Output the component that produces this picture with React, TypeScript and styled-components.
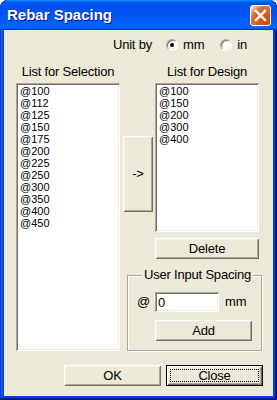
import styled, { createGlobalStyle } from "styled-components";

const UI_FONT = `"Liberation Sans", Arial, sans-serif`;

const GlobalStyle = createGlobalStyle`
  html, body {
    margin: 0;
    padding: 0;
    background: #ffffff;
  }
  body {
    width: 277px;
    height: 400px;
    overflow: hidden;
  }
`;

const selectionItems = [
  "@100", "@112", "@125", "@150", "@175", "@200",
  "@225", "@250", "@300", "@350", "@400", "@450",
];
const designItems = ["@100", "@150", "@200", "@300", "@400"];

export default function App() {
  return (
    <>
      <GlobalStyle />
      <Window>
        <TitleBar>
          <Title>Rebar Spacing</Title>
          <CloseBox>
            <svg width="19" height="19" viewBox="0 0 19 19">
              <path d="M5 5 L14 14 M14 5 L5 14" stroke="#fff" strokeWidth="2.4" strokeLinecap="square" />
            </svg>
          </CloseBox>
        </TitleBar>
        <Client>
          <UnitRow>
            <UnitLabel>Unit by</UnitLabel>
            <RadioOption>
              <Radio $checked />
              mm
            </RadioOption>
            <RadioOption $gap={5}>
              <Radio />
              in
            </RadioOption>
          </UnitRow>

          <Grid>
            <ColLabel $col={1}>List for Selection</ColLabel>
            <ColLabel $col={3}>List for Design</ColLabel>

            <SelectionList>
              {selectionItems.map((s) => (
                <Item key={s}>{s}</Item>
              ))}
            </SelectionList>

            <ArrowButton>-&gt;</ArrowButton>

            <DesignList>
              {designItems.map((s) => (
                <Item key={s}>{s}</Item>
              ))}
            </DesignList>

            <DeleteButton>Delete</DeleteButton>

            <GroupBox>
              <Legend>User Input Spacing</Legend>
              <InputRow>
                <At>@</At>
                <TextInput value="0" readOnly />
                <Unit>mm</Unit>
              </InputRow>
              <AddButton>Add</AddButton>
            </GroupBox>
          </Grid>

          <Footer>
            <Button $w={97}>OK</Button>
            <Button $w={97} $isDefault>
              <FocusRing>Close</FocusRing>
            </Button>
          </Footer>
        </Client>
      </Window>
    </>
  );
}

const Window = styled.div`
  box-sizing: border-box;
  width: 277px;
  height: 400px;
  display: flex;
  flex-direction: column;
  background: #0841dc;
  border-radius: 8px 8px 0 0;
  box-shadow: inset -1px -1px #00138c, inset 1px 1px #0831d9,
    inset -2px -2px #001ea0, inset 2px 2px #166aee, inset -3px -3px #003bda,
    inset 3px 3px #0855dd;
  overflow: hidden;
`;

const TitleBar = styled.div`
  height: 30px;
  flex: none;
  display: flex;
  align-items: center;
  justify-content: space-between;
  padding: 0 6px 0 6px;
  border-radius: 8px 8px 0 0;
  background: linear-gradient(
    180deg,
    #0997ff,
    #0053ee 8%,
    #0050ee 40%,
    #0066ff 88%,
    #0066ff 93%,
    #005bff 95%,
    #003dd7 96%,
    #003dd7
  );
`;

const Title = styled.div`
  font: bold 15px/16px "Liberation Sans", Arial, sans-serif;
  color: #ffffff;
  text-shadow: 1px 1px #0f1089;
  padding-left: 1px;
`;

const CloseBox = styled.div`
  box-sizing: border-box;
  width: 21px;
  height: 21px;
  border: 1px solid #ffffff;
  border-radius: 3px;
  display: flex;
  align-items: center;
  justify-content: center;
  background: radial-gradient(
    circle at 90% 90%,
    #cc4600 0%,
    #dc6527 55%,
    #cd7546 70%,
    #ffccb2 90%,
    #ffffff 100%
  );
  margin-top: 1px;
`;

const Client = styled.div`
  flex: 1;
  min-height: 0;
  margin: 0 4px 4px;
  background: #ece9d8;
  padding: 7px 10px 10px 12px;
  display: flex;
  flex-direction: column;
  font: 13px/16px ${UI_FONT};
  letter-spacing: -0.2px;
  color: #000;
`;

const UnitRow = styled.div`
  height: 16px;
  display: flex;
  align-items: center;
  justify-content: flex-end;
  padding-right: 16px;
`;

const UnitLabel = styled.span`
  margin-right: 14px;
`;

const RadioOption = styled.label<{ $gap?: number }>`
  display: flex;
  align-items: center;
  gap: ${(p) => p.$gap ?? 5}px;
  margin-left: 16px;

  &:first-of-type {
    margin-left: 0;
  }
`;

const Radio = styled.span<{ $checked?: boolean }>`
  position: relative;
  box-sizing: border-box;
  width: 12px;
  height: 12px;
  border-radius: 50%;
  background: #ffffff;
  border: 1px solid;
  border-color: #aca899 #ffffff #ffffff #aca899;
  box-shadow: inset 1px 1px #716f64, inset -1px -1px #f1efe2;

  &::after {
    content: "";
    display: ${(p) => (p.$checked ? "block" : "none")};
    position: absolute;
    left: 3px;
    top: 3px;
    width: 4px;
    height: 4px;
    border-radius: 50%;
    background: #000;
  }
`;

const Grid = styled.div`
  margin-top: 11px;
  display: grid;
  grid-template-columns: 104px 35px 104px 1fr;
  grid-template-rows: 16px auto auto auto;
`;

const ColLabel = styled.div<{ $col: number }>`
  grid-row: 1;
  grid-column: ${(p) => p.$col};
  text-align: center;
  white-space: nowrap;
`;

const sunken = `
  background: #ffffff;
  box-shadow: inset 1px 1px #aca899, inset -1px -1px #ffffff,
    inset 2px 2px #716f64, inset -2px -2px #f1efe2;
`;

const ListBox = styled.div`
  ${sunken}
  box-sizing: border-box;
  margin-top: 3px;
  padding: 2px 2px 2px 4px;
  font: 11px/12px ${UI_FONT};
  letter-spacing: 0;
  overflow: hidden;
`;

const SelectionList = styled(ListBox)`
  grid-column: 1;
  grid-row: 2 / 5;
`;

const DesignList = styled(ListBox)`
  grid-column: 3;
  grid-row: 2;
  height: 149px;
`;

const Item = styled.div`
  height: 12px;
  white-space: nowrap;
`;

const raised = `
  background: #ece9d8;
  border: none;
  box-shadow: inset 1px 1px #ffffff, inset -1px -1px #716f64,
    inset 2px 2px #f1efe2, inset -2px -2px #aca899;
`;

const Button = styled.button<{ $w?: number; $isDefault?: boolean }>`
  ${raised}
  box-sizing: border-box;
  width: ${(p) => (p.$w ? `${p.$w}px` : "100%")};
  height: 21px;
  padding: 0;
  margin: 0;
  display: flex;
  align-items: center;
  justify-content: center;
  font: 13px/16px ${UI_FONT};
  letter-spacing: -0.2px;
  color: #000;
  ${(p) =>
    p.$isDefault &&
    `
    box-shadow: inset 0 0 0 1px #000000, inset 2px 2px #ffffff,
      inset -2px -2px #716f64, inset 3px 3px #f1efe2, inset -3px -3px #aca899;
    padding: 4px;
  `}
`;

const FocusRing = styled.span`
  box-sizing: border-box;
  flex: 1;
  align-self: stretch;
  display: flex;
  align-items: center;
  justify-content: center;
  border: 1px dotted #000;
`;

const ArrowButton = styled(Button)`
  grid-column: 2;
  grid-row: 2;
  align-self: start;
  width: 30px;
  height: 76px;
  margin: 56px 0 0 3px;
`;

const DeleteButton = styled(Button)`
  grid-column: 3;
  grid-row: 3;
  margin-top: 6px;
`;

const GroupBox = styled.fieldset`
  grid-column: 2 / 5;
  grid-row: 4;
  box-sizing: border-box;
  min-width: 0;
  margin: 8px 1px 0 7px;
  padding: 9px 9px 9px 9px;
  border: 1px solid #aca899;
  box-shadow: inset 1px 1px #ffffff, 1px 1px #ffffff;
`;

const Legend = styled.legend`
  padding: 0 2px;
  margin-left: 5px;
  background: #ece9d8;
  line-height: 16px;
  white-space: nowrap;
`;

const InputRow = styled.div`
  display: flex;
  align-items: center;
  height: 20px;
`;

const At = styled.span`
  width: 18px;
`;

const TextInput = styled.input`
  ${sunken}
  box-sizing: border-box;
  width: 64px;
  height: 20px;
  border: none;
  outline: none;
  padding: 2px 3px;
  font: 13px/16px ${UI_FONT};
  color: #000;
`;

const Unit = styled.span`
  margin-left: 6px;
`;

const AddButton = styled(Button)`
  width: 97px;
  margin: 8px 0 0 18px;
`;

const Footer = styled.div`
  margin-top: 14px;
  display: flex;
  justify-content: flex-end;
  gap: 5px;
`;
